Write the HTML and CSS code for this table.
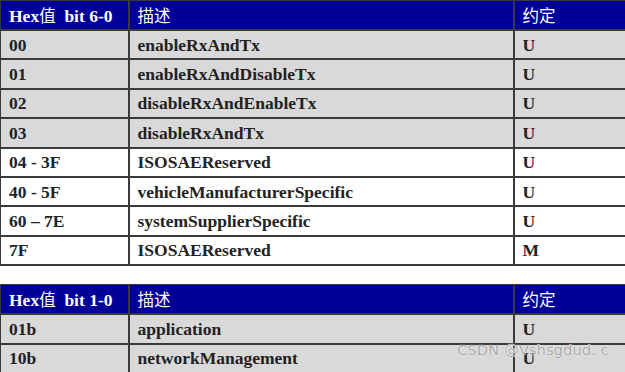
FILE: index.html
```html
<!DOCTYPE html>
<html>
<head>
<meta charset="utf-8">
<link rel="stylesheet" href="styles.css">
</head>
<body>
<div class="page">
  <table class="tbl">
    <colgroup><col class="c1"><col class="c2"><col class="c3"></colgroup>
    <tr class="hd"><th><b>Hex</b><span class="cjk">值</span>&nbsp; <b>bit 6-0</b></th><th><span class="cjk">描述</span></th><th><span class="cjk">约定</span></th></tr>
    <tr class="g"><td>00</td><td>enableRxAndTx</td><td>U</td></tr>
    <tr class="g"><td>01</td><td>enableRxAndDisableTx</td><td>U</td></tr>
    <tr class="g"><td>02</td><td>disableRxAndEnableTx</td><td>U</td></tr>
    <tr class="g"><td>03</td><td>disableRxAndTx</td><td>U</td></tr>
    <tr class="w"><td>04 - 3F</td><td>ISOSAEReserved</td><td>U</td></tr>
    <tr class="w"><td>40 - 5F</td><td>vehicleManufacturerSpecific</td><td>U</td></tr>
    <tr class="w"><td>60 – 7E</td><td>systemSupplierSpecific</td><td>U</td></tr>
    <tr class="w"><td>7F</td><td>ISOSAEReserved</td><td>M</td></tr>
  </table>
  <table class="tbl second">
    <colgroup><col class="c1"><col class="c2"><col class="c3"></colgroup>
    <tr class="hd"><th><b>Hex</b><span class="cjk">值</span>&nbsp; <b>bit 1-0</b></th><th><span class="cjk">描述</span></th><th><span class="cjk">约定</span></th></tr>
    <tr class="g"><td>01b</td><td>application</td><td>U</td></tr>
    <tr class="g"><td>10b</td><td>networkManagement</td><td>U</td></tr>
  </table>
  <div class="wm">CSDN @Vshsgdud. c</div>
</div>
</body>
</html>
```
FILE: styles.css
```css
html, body {
  margin: 0;
  padding: 0;
  background: #fff;
}
.page {
  position: relative;
  width: 625px;
  height: 372px;
  overflow: hidden;
}
.tbl {
  border-collapse: collapse;
  width: 627px;
  table-layout: fixed;
  font-family: "Liberation Serif", "Times New Roman", serif;
  font-weight: bold;
  font-size: 17.5px;
  color: #222;
}
.second {
  margin-top: 18px;
}
.c1 { width: 128px; }
.c2 { width: 385px; }
.c3 { width: 114px; }
.tbl th, .tbl td {
  border: 2px solid #3a3a3a;
  padding: 0 0 0 8px;
  text-align: left;
  vertical-align: middle;
  line-height: 20px;
  white-space: nowrap;
}
.tbl tr:first-child th {
  border-top: 1px solid #3a3a3a;
}
.tbl td:first-child, .tbl th:first-child {
  border-left: 1px solid #3a3a3a;
}
.hd th {
  background: #000099;
  color: #fff;
  height: 28px;
  font-weight: bold;
}
.cjk {
  font-family: "Noto Sans CJK SC", sans-serif;
  font-weight: normal;
  font-size: 16.5px;
}
.g td {
  background: #d9d9d9;
  height: 27.4px;
}
.w td {
  background: #fff;
  height: 27.4px;
}
.wm {
  position: absolute;
  left: 457px;
  top: 341px;
  font-family: "DejaVu Sans", sans-serif;
  font-size: 14.8px;
  color: #a8a8a8;
  text-shadow: 0 0 1px #fff, 0 0 1px #fff;
}
```
